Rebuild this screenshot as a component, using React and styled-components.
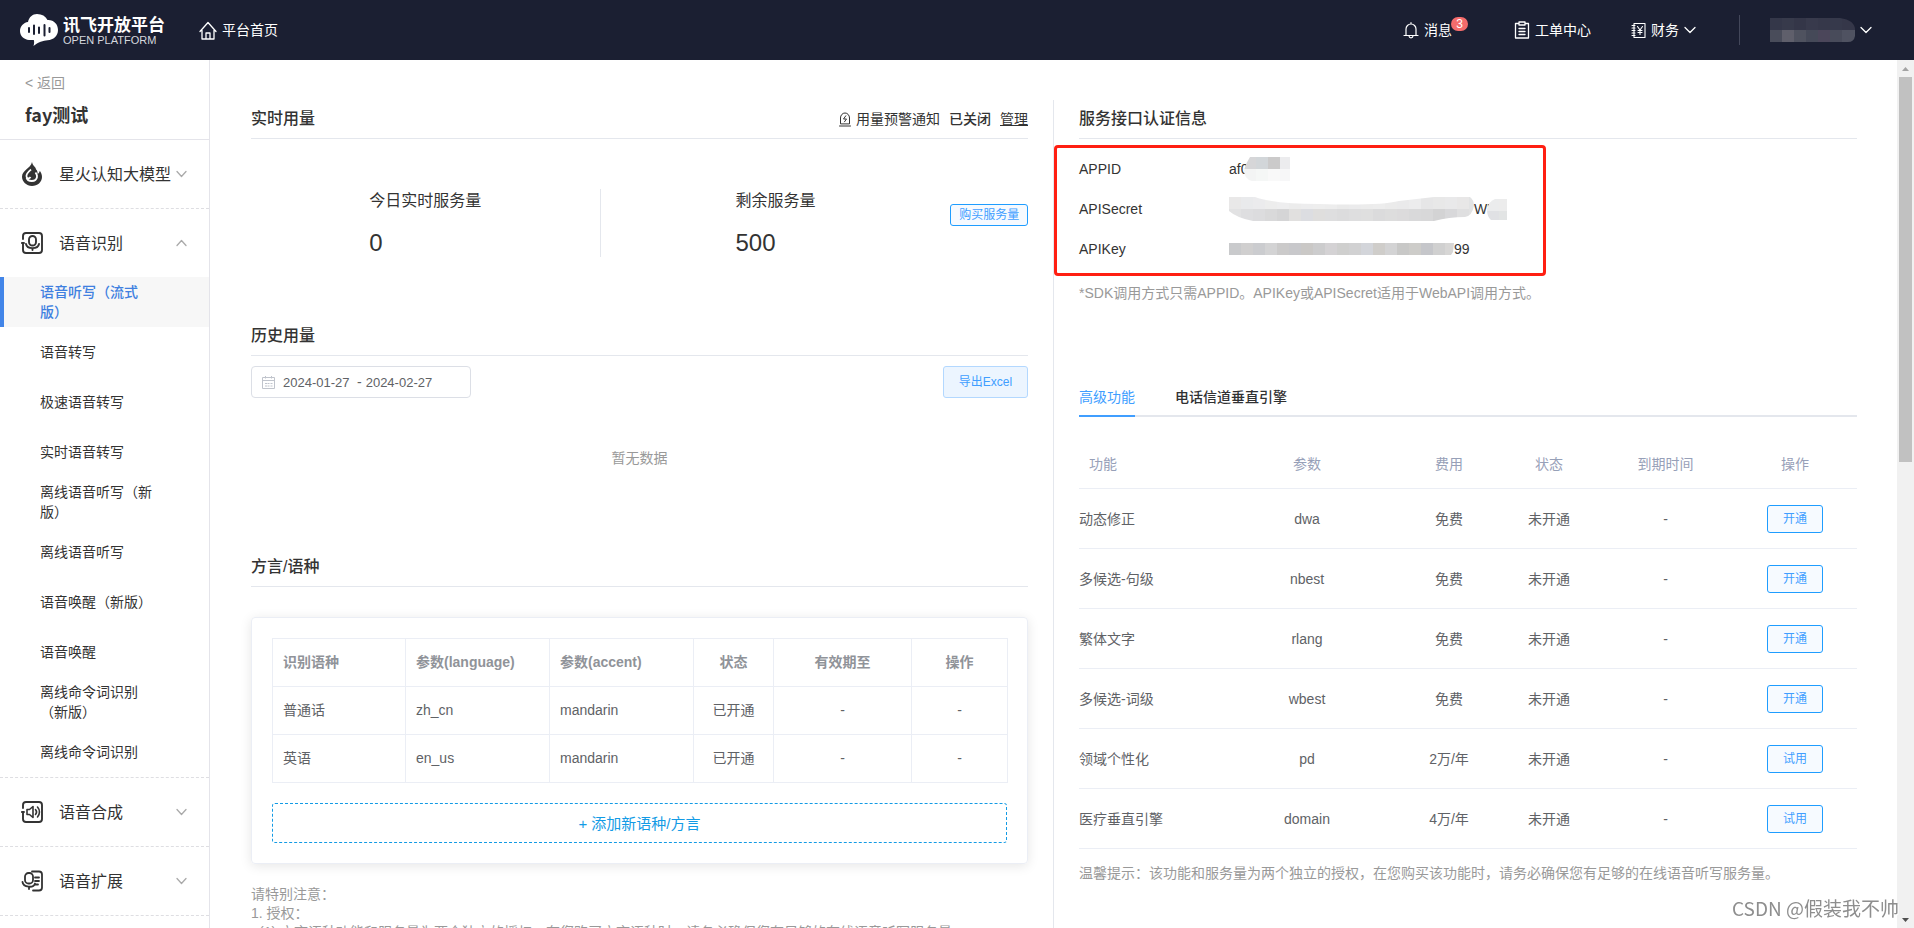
import React from 'react'
import styled, { createGlobalStyle, css } from 'styled-components'

const latin = `'Liberation Sans', 'Noto Sans CJK SC', sans-serif`
const cjk = `'Noto Sans CJK SC', sans-serif`

const GlobalStyle = createGlobalStyle`
  * {
    box-sizing: border-box;
  }
  body {
    margin: 0;
    background: #fff;
    color: #333;
    font-family: ${latin};
    font-size: 14px;
    line-height: 20px;
  }
  button, input {
    font-family: inherit;
  }
  a {
    color: inherit;
    text-decoration: none;
  }
`

const Page = styled.div`
  display: flex;
  flex-direction: column;
  height: 100vh;
  overflow: hidden;
`

/* ---------- top bar ---------- */

const TopBar = styled.header`
  display: flex;
  align-items: center;
  flex: none;
  height: 60px;
  padding: 0 42px 0 20px;
  background: #1b1f32;
  color: #fff;
`
const Brand = styled.a`
  display: flex;
  align-items: center;
  gap: 5px;
  height: 32px;
`
const BrandText = styled.span`
  display: flex;
  flex-direction: column;
  width: 106px;
`
const BrandName = styled.strong`
  font-family: ${cjk};
  font-size: 17px;
  font-weight: 700;
  line-height: 20px;
`
const BrandSub = styled.span`
  font-size: 11px;
  line-height: 12px;
  color: #d5d7de;
  white-space: nowrap;
`
const TopLink = styled.a`
  display: flex;
  align-items: center;
  gap: 5px;
  margin-left: ${props => props.$space}px;
  white-space: nowrap;
`
const Spacer = styled.div`
  flex: 1;
`
const Anchor = styled.span`
  position: relative;
`
const Badge = styled.span`
  position: absolute;
  top: -3px;
  left: 27px;
  min-width: 17px;
  height: 14px;
  border-radius: 7px;
  background: #f56c6c;
  font-size: 12px;
  line-height: 14px;
  text-align: center;
`
const BarDivider = styled.span`
  width: 1px;
  height: 30px;
  margin-left: 43px;
  background: #43475a;
`

/* ---------- sidebar ---------- */

const Body = styled.div`
  display: flex;
  flex: 1;
  min-height: 0;
`
const Sidebar = styled.aside`
  flex: none;
  width: 210px;
  overflow: hidden;
  border-right: 1px solid #e4e4ea;
`
const AppHead = styled.div`
  display: flex;
  flex-direction: column;
  gap: 10px;
  height: 80px;
  padding: 13px 25px 0;
  border-bottom: 1px solid #e4e4ea;
`
const Back = styled.a`
  color: #999;
`
const AppName = styled.h1`
  margin: 0;
  font-family: ${cjk};
  font-size: 18px;
  font-weight: 700;
  line-height: 22px;
`
const MenuGroup = styled.div`
  border-bottom: 1px dashed #dedee2;
`
const MenuHead = styled.button`
  display: flex;
  align-items: center;
  width: 100%;
  height: 68px;
  padding: 0 22px 0 21px;
  border: 0;
  background: none;
  color: #333;
  font-size: 16px;
  text-align: left;
`
const MenuLabel = styled.span`
  flex: 1;
  margin-left: 16px;
  padding-bottom: 2px;
  white-space: nowrap;
`
const MenuArrow = styled.span`
  display: flex;
  color: #aaa;
`
const SubItem = styled.a`
  display: flex;
  align-items: center;
  height: 50px;
  padding-left: 36px;
  border-left: 4px solid transparent;

  span {
    width: 116px;
  }

  ${props =>
    props.$active &&
    css`
      border-color: #4285e8;
      background: #f7f7f7;
      color: #4080e0;
      font-weight: 500;
    `}
`

/* ---------- content ---------- */

const Content = styled.main`
  display: flex;
  flex: 1;
  min-width: 0;
  overflow: hidden;
  padding: 40px 40px 0 41px;
`
const LeftColumn = styled.div`
  flex: none;
  width: 50%;
  padding-right: 25px;
  border-right: 1px solid #e4e7ed;
`
const RightColumn = styled.div`
  flex: none;
  width: 50%;
  padding-left: 25px;
`
const SectionHead = styled.div`
  display: flex;
  align-items: center;
  justify-content: space-between;
  height: 39px;
  border-bottom: 1px solid #e4e7ed;
`
const SectionTitle = styled.h2`
  margin: 0;
  font-family: ${latin};
  font-size: 16px;
  font-weight: 500;
`
const Notice = styled.div`
  display: flex;
  align-items: center;
  gap: 5px;

  strong {
    margin-left: 4px;
    font-weight: 500;
  }
  a {
    margin-left: 4px;
    text-decoration: underline;
  }
`
const Stats = styled.div`
  display: flex;
  align-items: center;
  height: 68px;
  margin: 50px 0 60px;
`
const Stat = styled.div`
  display: flex;
  justify-content: center;
  flex: 0 0 45%;
  height: 68px;
  border-right: ${props => (props.$divided ? '1px solid #e4e7ed' : '0')};

  dl {
    margin: 0;
  }
  dt {
    font-size: 16px;
    line-height: 24px;
  }
  dd {
    margin: 14px 0 0;
    font-size: 24px;
    line-height: 32px;
  }
`
const Button = styled.button`
  height: ${props => props.$height}px;
  padding: 0;
  width: ${props => props.$width}px;
  border: 1px solid ${props => (props.$soft ? '#b3d8ff' : '#1f9dff')};
  border-radius: 3px;
  background: ${props => (props.$soft ? '#ecf5ff' : '#f6faff')};
  color: #409eff;
  font-size: 12px;
  line-height: 16px;
`
const BuyCell = styled.div`
  display: flex;
  justify-content: flex-end;
  flex: 1;
  padding-bottom: 16px;
`
const Filters = styled.div`
  display: flex;
  justify-content: space-between;
  margin-top: 10px;
`
const DateRange = styled.div`
  display: flex;
  align-items: center;
  gap: 4px;
  width: 220px;
  height: 32px;
  padding-left: 10px;
  border: 1px solid #dcdfe6;
  border-radius: 4px;
  color: #606266;

  svg {
    margin-right: 4px;
  }
`
const DateInput = styled.input`
  width: 70px;
  padding: 0;
  border: 0;
  background: none;
  color: #606266;
  font-size: 13px;
`
const Empty = styled.p`
  margin: 50px 0 80px;
  color: #999;
  text-align: center;
`
const Card = styled.div`
  margin: 30px 0 21px;
  padding: 20px;
  border: 1px solid #ebeef5;
  border-radius: 4px;
  box-shadow: 0 2px 12px rgba(0, 0, 0, 0.1);
`
const LanguageTable = styled.table`
  width: 100%;
  table-layout: fixed;
  border-collapse: collapse;
  color: #606266;

  th, td {
    height: 48px;
    padding: 0 10px 2px;
    border: 1px solid #ebeef5;
    text-align: left;
  }
  th {
    color: #909399;
    font-weight: 700;
  }
  th:nth-child(n + 4), td:nth-child(n + 4) {
    text-align: center;
  }
`
const AddButton = styled.button`
  display: block;
  width: 100%;
  height: 40px;
  margin-top: 20px;
  padding-bottom: 2px;
  border: 1px dashed #139be5;
  border-radius: 3px;
  background: #fff;
  color: #139be5;
  font-size: 15px;
`
const Remarks = styled.div`
  color: #999;
  line-height: 19px;

  p {
    margin: 0;
    white-space: nowrap;
  }
  p:nth-child(3) {
    padding-left: 8px;
  }
`
const AuthInfo = styled.dl`
  position: relative;
  margin: 10px 0 0;
`
const AuthRow = styled.div`
  display: flex;
  align-items: center;
  height: 40px;

  dt {
    width: 150px;
  }
  dd {
    display: flex;
    align-items: center;
    margin: 0;
  }
`
const Highlight = styled.div`
  position: absolute;
  top: -4px;
  left: -25px;
  width: 492px;
  height: 131px;
  border: 3px solid #ff1f12;
  border-radius: 4px;
  pointer-events: none;
`
const Hint = styled.p`
  margin: 14px 0;
  color: #999;
`
const Tabs = styled.div`
  display: flex;
  gap: 40px;
  height: 40px;
  margin: 74px 0 23px;
  border-bottom: 2px solid #e4e7ed;
`
const Tab = styled.button`
  height: 40px;
  padding: 0;
  border: 0;
  border-bottom: 2px solid ${props => (props.$active ? '#409eff' : 'transparent')};
  background: none;
  color: ${props => (props.$active ? '#409eff' : '#303133')};
  font-size: 14px;
  font-weight: ${props => (props.$active ? 400 : 500)};
`
const FeatureTable = styled.table`
  width: 100%;
  table-layout: fixed;
  border-collapse: collapse;
  color: #606266;
  text-align: center;

  th, td {
    padding: 0;
    border-bottom: 1px solid #ebeef5;
  }
  th {
    height: 48px;
    color: #97a0b8;
    font-weight: 400;
  }
  td {
    height: 60px;
    padding-top: 1px;
  }
  th:first-child, td:first-child {
    text-align: left;
  }
  th:first-child {
    padding-left: 10px;
  }
`

/* ---------- scrollbar, watermark ---------- */

const ScrollTrack = styled.div`
  display: flex;
  flex-direction: column;
  align-items: center;
  flex: none;
  width: 17px;
  background: #f1f1f1;
`
const ScrollThumb = styled.div`
  flex: 6;
  width: 13px;
  background: #c1c1c1;
`
const ScrollRest = styled.div`
  flex: 7;
`
const ScrollArrow = styled.span`
  display: flex;
  align-items: center;
  justify-content: center;
  flex: none;
  height: 17px;
`
const Watermark = styled.div`
  position: fixed;
  right: 15px;
  bottom: 8px;
  color: #8e8e8e;
  font-family: ${cjk};
  font-size: 19px;
  line-height: 24px;
  text-shadow: 1px 1px 1px #fff;
`

/* ---------- icons ---------- */

const LineIcon = ({ w, h, stroke = 1, children }) => (
  <svg width={w} height={h} viewBox={`0 0 ${w} ${h}`} fill="none" stroke="currentColor" strokeWidth={stroke} strokeLinecap="round" strokeLinejoin="round" aria-hidden="true">
    {children}
  </svg>
)

const Logo = () => (
  <svg width="38" height="32" viewBox="0 0 38 32" aria-hidden="true">
    <path fill="#fff" d="M8 8C9 3 12.500 0 17 0c5 0 8.500 2 10.500 6C33.500 5.500 38 10 38 16c0 6-4.500 10-10.500 10.200C23.500 26.500 18 28 13.500 32c.8-2.500.8-4.500.3-6H9C4 25.500 0 22 0 17c0-4.500 3.500-8.500 8-9z" />
    <path stroke="#1b1f32" strokeWidth="2" strokeLinecap="round" d="M9 14v4M14 11.500v8.500M19 13.500v5.500M24.500 11v10.500M29.500 14v4" />
  </svg>
)
const HomeIcon = () => (
  <LineIcon w={18} h={19} stroke={1.3}>
    <path d="M1 10.500 9 1.500l8 9M3 9.500V18h12V9.500M7 18v-6h4v6" />
  </LineIcon>
)
const BellIcon = () => (
  <LineIcon w={16} h={17} stroke={1.2}>
    <path d="M1 13.500h14M3 13.500V7a5 5 0 0 1 10 0v6.500M6 14c.3 2.600 3.700 2.600 4 0M8 2V.7" />
  </LineIcon>
)
const OrderIcon = () => (
  <LineIcon w={16} h={18} stroke={1.3}>
    <path d="M4.500 2.500H1.500v14.500h13V2.500h-3M5 1h6v3H5zM5 7.500h6M5 10.500h6M5 13.500h6" />
  </LineIcon>
)
const FinanceIcon = () => (
  <LineIcon w={15} h={17} stroke={1.1}>
    <path d="M3 1.500h11v14H3zM1 3.500h3M1 6h3M1 8.500h3M1 11h3M1 13.500h3M6.500 4.500l2.500 3.500 2.500-3.500M9 8v4.500M7 8.500h4M7 10.500h4" />
  </LineIcon>
)
const Chevron = ({ w = 12, up }) => (
  <LineIcon w={w} h={8} stroke={1.3}>
    <path d={up ? `M1 6.500 ${w / 2} 1.500 ${w - 1} 6.500` : `M1 1.500 ${w / 2} 6.500 ${w - 1} 1.500`} />
  </LineIcon>
)
const FlameIcon = () => (
  <svg width="22" height="24" viewBox="0 0 22 24" aria-hidden="true">
    <path fill="#333" d="M11 0c-.6 3.500-3.300 5.300-5.500 7.300C2.900 9.700 1 11.500 1 14.800 1 19.800 5.500 24 11 24s10-4 10-9c0-2.300-.8-4.600-2.200-6.300-.3 1.600-1 2.500-2.300 3.300C17 8.500 15 6.500 13.400 4.600 12.200 3.200 11.300 1.800 11 0z" />
    <path fill="none" stroke="#fff" strokeWidth="1.800" d="M10 7.500C7 10 5 11.500 5.500 14.500c.3 2.200 2.800 2.500 4 .5M5.500 15.500c1 4.500 9.500 5 10.500-.5.300-1.800-.4-3-1.500-4.500" />
    <path fill="#fff" d="m14.500 6.500 6-2-3 6z" />
  </svg>
)
const MicIcon = () => (
  <LineIcon w={22} h={22} stroke={1.9}>
    <path d="M2 7V4q0-3 3-3h13q3 0 3 3v14q0 3-3 3H5q-3 0-3-3v-7M.8 11H3" />
    <rect x="8" y="4" width="7" height="9.500" rx="3.500" />
    <path d="M5 12c1 5.500 12 5.500 13 0M11.500 16.500V18" />
  </LineIcon>
)
const SpeakerIcon = () => (
  <LineIcon w={22} h={22} stroke={1.9}>
    <path d="M2 7V4q0-3 3-3h13q3 0 3 3v14q0 3-3 3H5q-3 0-3-3v-7M.8 11H3" />
    <path strokeWidth="1.600" d="M6 8.500h2.500L12 5.500v11l-3.500-3H6zM14.500 8.500c1.300 1.500 1.300 3.500 0 5M16.500 6c2.600 2.800 2.600 7.200 0 10" />
  </LineIcon>
)
const ExtendIcon = () => (
  <LineIcon w={22} h={22} stroke={1.8}>
    <path d="M11 1.500h7q3 0 3 3v13q0 3-3 3h-6M14 7.500h4M14 11h4M14 14.500h3" />
    <rect x="4" y="3" width="8" height="10.500" rx="3.500" />
    <path d="M1.500 12c.8 5.500 11 6.500 12.500 1.500M8 17v2" />
  </LineIcon>
)
const AlertIcon = () => (
  <LineIcon w={12} h={15}>
    <path d="M1.500 11.500V6a4.500 5 0 0 1 9 0v5.500zM.5 14h11M6.800 3.800 4.500 7H7.500L5.500 9.800" />
  </LineIcon>
)
const CalendarIcon = () => (
  <svg width="13" height="13" viewBox="0 0 13 13" fill="none" stroke="#c0c4cc" aria-hidden="true">
    <path d="M.5 1.500h12v11H.5zM.5 4.500h12M3.500 0v2.500M9.500 0v2.500M3 7.500h2M5.500 7.500h2M8.500 7.500h2M3 10h2M5.500 10h2M8.500 10h2" />
  </svg>
)
const ScrollTriangle = ({ down }) => (
  <svg width="7" height="4" viewBox="0 0 7 4" aria-hidden="true">
    <path d={down ? 'M0 0h7L3.500 4z' : 'M0 4h7L3.500 0z'} fill={down ? '#505050' : '#a3a3a3'} />
  </svg>
)

// masked values: a grid of 12px tiles cut to a brushed outline
const Mosaic = ({ id, width, height, outline, rows, pull = 0, tile = 12 }) => (
  <svg width={width} height={height} viewBox={`0 0 ${width} ${height}`} style={{ marginLeft: -pull }} aria-hidden="true">
    <clipPath id={id}>
      <path d={outline} />
    </clipPath>
    <g clipPath={`url(#${id})`}>
      {rows.map((row, y) =>
        row.map((fill, x) => (
          <rect key={`${y}-${x}`} x={x * tile} y={y * tile} width={tile} height={tile} fill={fill} />
        ))
      )}
    </g>
  </svg>
)

const userTiles = [
  ['#343749', '#373a4b', '#343648', '#383a4c', '#36384a', '#36394b', '#353749', '#36384a'],
  ['#494c5a', '#5f5f6b', '#4f525f', '#454958', '#4b465a', '#484b5a', '#4f5261', '#505463']
]
const idTiles = [
  ['#d6d6d8', '#d2d6d9', '#cbcaca', '#ececee'],
  ['#f3f4f4', '#f5f7f6', '#f9f9f9', '#f7f7f8']
]
const secretTiles = [
  ['#e9e8e8', '#e9eaec', '#ebebed', '#ededed', '#eeeeef', '#ececec', '#ededee', '#eeeeee', '#ededed', '#eaeaea', '#ebebec', '#ececec', '#ededed', '#ebebeb', '#eaeaeb', '#ececed', '#e6e6e7', '#e8e8e8', '#e9e9ea', '#e8e7e7', '#e2e3e4'],
  ['#e2e2e3', '#dedee0', '#dcdcde', '#d9d9da', '#d5d5d6', '#e1e0df', '#dcdde1', '#dfdedd', '#dededf', '#dcdcdd', '#dededf', '#dfdfdf', '#dbdbdc', '#dddddd', '#dcdbdc', '#d9d9da', '#d8d8d9', '#d3d3d4', '#d8d8da', '#dfdfe0', '#e2e2e2']
]
const secretEndTiles = [
  ['#ebeced', '#ececec'],
  ['#e0e1e4', '#e2e4e4']
]
const keyTiles = [
  ['#c9cacc', '#d0cfcf', '#cbcccf', '#d3d3d4', '#cbcaca', '#c8c8cb', '#cac8c6', '#cccccd', '#d4d2d4', '#cfcfce', '#d1d1d2', '#d3d5da', '#cfcdca', '#d3d3d4', '#c8c8c7', '#cdccc9', '#c5c6ca', '#d0d0d0', '#d7d6d5']
]

/* ---------- data ---------- */

const recognitionItems = [
  '语音听写（流式版）',
  '语音转写',
  '极速语音转写',
  '实时语音转写',
  '离线语音听写（新版）',
  '离线语音听写',
  '语音唤醒（新版）',
  '语音唤醒',
  '离线命令词识别（新版）',
  '离线命令词识别'
]

const menu = [
  { label: '星火认知大模型', icon: <FlameIcon /> },
  { label: '语音识别', icon: <MicIcon />, items: recognitionItems },
  { label: '语音合成', icon: <SpeakerIcon /> },
  { label: '语音扩展', icon: <ExtendIcon /> }
]

const languages = [
  ['普通话', 'zh_cn', 'mandarin', '已开通', '-', '-'],
  ['英语', 'en_us', 'mandarin', '已开通', '-', '-']
]

const features = [
  ['动态修正', 'dwa', '免费', '开通'],
  ['多候选-句级', 'nbest', '免费', '开通'],
  ['繁体文字', 'rlang', '免费', '开通'],
  ['多候选-词级', 'wbest', '免费', '开通'],
  ['领域个性化', 'pd', '2万/年', '试用'],
  ['医疗垂直引擎', 'domain', '4万/年', '试用']
]

const Columns = ({ widths }) => (
  <colgroup>
    {widths.map((width, i) => (
      <col key={i} style={{ width }} />
    ))}
  </colgroup>
)

const Header = () => (
  <TopBar>
    <Brand href="#">
      <Logo />
      <BrandText>
        <BrandName>讯飞开放平台</BrandName>
        <BrandSub>OPEN PLATFORM</BrandSub>
      </BrandText>
    </Brand>
    <TopLink href="#" $space={30}>
      <HomeIcon />
      平台首页
    </TopLink>
    <Spacer />
    <TopLink href="#" $space={0}>
      <BellIcon />
      <Anchor>
        消息<Badge>3</Badge>
      </Anchor>
    </TopLink>
    <TopLink href="#" $space={62}>
      <OrderIcon />
      工单中心
    </TopLink>
    <TopLink href="#" $space={40}>
      <FinanceIcon />
      财务
      <Chevron />
    </TopLink>
    <BarDivider />
    <TopLink href="#" $space={30} aria-label="账号">
      <Mosaic id="user" width={85} height={24} rows={userTiles} outline="M0 0H70Q85 2 85 12V18Q84 24 78 24H0z" />
      <Chevron />
    </TopLink>
  </TopBar>
)

const SideMenu = () => (
  <Sidebar>
    <AppHead>
      <Back href="#">&lt; 返回</Back>
      <AppName>fay测试</AppName>
    </AppHead>
    <nav>
      {menu.map(({ label, icon, items }) => (
        <MenuGroup key={label}>
          <MenuHead type="button" aria-expanded={!!items}>
            {icon}
            <MenuLabel>{label}</MenuLabel>
            <MenuArrow>
              <Chevron w={11} up={!!items} />
            </MenuArrow>
          </MenuHead>
          {items &&
            items.map((item, i) => (
              <SubItem key={item} href="#" $active={i === 0}>
                <span>{item}</span>
              </SubItem>
            ))}
        </MenuGroup>
      ))}
    </nav>
  </Sidebar>
)

const Usage = () => (
  <LeftColumn>
    <SectionHead>
      <SectionTitle>实时用量</SectionTitle>
      <Notice>
        <AlertIcon />
        用量预警通知
        <strong>已关闭</strong>
        <a href="#">管理</a>
      </Notice>
    </SectionHead>
    <Stats>
      <Stat $divided>
        <dl>
          <dt>今日实时服务量</dt>
          <dd>0</dd>
        </dl>
      </Stat>
      <Stat>
        <dl>
          <dt>剩余服务量</dt>
          <dd>500</dd>
        </dl>
      </Stat>
      <BuyCell>
        <Button type="button" $width={78} $height={22}>购买服务量</Button>
      </BuyCell>
    </Stats>
    <SectionHead>
      <SectionTitle>历史用量</SectionTitle>
    </SectionHead>
    <Filters>
      <DateRange>
        <CalendarIcon />
        <DateInput aria-label="开始日期" defaultValue="2024-01-27" />
        -
        <DateInput aria-label="结束日期" defaultValue="2024-02-27" />
      </DateRange>
      <Button type="button" $soft $width={85} $height={32}>导出Excel</Button>
    </Filters>
    <Empty>暂无数据</Empty>
    <SectionHead>
      <SectionTitle>方言/语种</SectionTitle>
    </SectionHead>
    <Card>
      <LanguageTable>
        <Columns widths={[133, 144, 144, 80, 138, 96]} />
        <thead>
          <tr>
            <th>识别语种</th>
            <th>参数(language)</th>
            <th>参数(accent)</th>
            <th>状态</th>
            <th>有效期至</th>
            <th>操作</th>
          </tr>
        </thead>
        <tbody>
          {languages.map(row => (
            <tr key={row[0]}>
              {row.map((cell, i) => (
                <td key={i}>{cell}</td>
              ))}
            </tr>
          ))}
        </tbody>
      </LanguageTable>
      <AddButton type="button">+ 添加新语种/方言</AddButton>
    </Card>
    <Remarks>
      <p>请特别注意：</p>
      <p>1. 授权：</p>
      <p>(1) 方言语种功能和服务量为两个独立的授权，在您购买方言语种时，请务必确保您有足够的在线语音听写服务量</p>
    </Remarks>
  </LeftColumn>
)

const Credentials = () => (
  <RightColumn>
    <SectionHead>
      <SectionTitle>服务接口认证信息</SectionTitle>
    </SectionHead>
    <AuthInfo>
      <AuthRow>
        <dt>APPID</dt>
        <dd>
          af0
          <Mosaic id="appid" width={46} height={24} pull={4} rows={idTiles} outline="M6 0H46V24H8Q0 22 0 13Q2 6 6 0z" />
        </dd>
      </AuthRow>
      <AuthRow>
        <dt>APISecret</dt>
        <dd>
          <Mosaic id="secret" width={245} height={24} rows={secretTiles} outline="M0 0H26Q45 7 90 7Q150 9 170 4L205 0H241Q245 3 245 9Q243 19 236 20Q220 20 205 24H24Q8 21 0 14z" />
          W'
          <Mosaic id="secret-end" width={20} height={21} pull={3} rows={secretEndTiles} outline="M8 0H20V21H4Q0 18 0 10Q2 2 8 0z" />
        </dd>
      </AuthRow>
      <AuthRow>
        <dt>APIKey</dt>
        <dd>
          <Mosaic id="key" width={225} height={12} rows={keyTiles} outline="M0 0H225L224 9L222 12H0z" />
          99
        </dd>
      </AuthRow>
      <Highlight />
    </AuthInfo>
    <Hint>*SDK调用方式只需APPID。APIKey或APISecret适用于WebAPI调用方式。</Hint>
    <Tabs role="tablist">
      <Tab type="button" role="tab" aria-selected="true" $active>高级功能</Tab>
      <Tab type="button" role="tab" aria-selected="false">电话信道垂直引擎</Tab>
    </Tabs>
    <FeatureTable>
      <Columns widths={[137, 182, 102, 98, 135, 124]} />
      <thead>
        <tr>
          <th>功能</th>
          <th>参数</th>
          <th>费用</th>
          <th>状态</th>
          <th>到期时间</th>
          <th>操作</th>
        </tr>
      </thead>
      <tbody>
        {features.map(([name, param, price, action]) => (
          <tr key={param}>
            <td>{name}</td>
            <td>{param}</td>
            <td>{price}</td>
            <td>未开通</td>
            <td>-</td>
            <td>
              <Button type="button" $width={56} $height={28}>{action}</Button>
            </td>
          </tr>
        ))}
      </tbody>
    </FeatureTable>
    <Hint>温馨提示：该功能和服务量为两个独立的授权，在您购买该功能时，请务必确保您有足够的在线语音听写服务量。</Hint>
  </RightColumn>
)

const App = () => (
  <Page>
    <GlobalStyle />
    <Header />
    <Body>
      <SideMenu />
      <Content>
        <Usage />
        <Credentials />
      </Content>
      <ScrollTrack aria-hidden="true">
        <ScrollArrow>
          <ScrollTriangle />
        </ScrollArrow>
        <ScrollThumb />
        <ScrollRest />
        <ScrollArrow>
          <ScrollTriangle down />
        </ScrollArrow>
      </ScrollTrack>
    </Body>
    <Watermark>CSDN @假装我不帅</Watermark>
  </Page>
)

export default App
